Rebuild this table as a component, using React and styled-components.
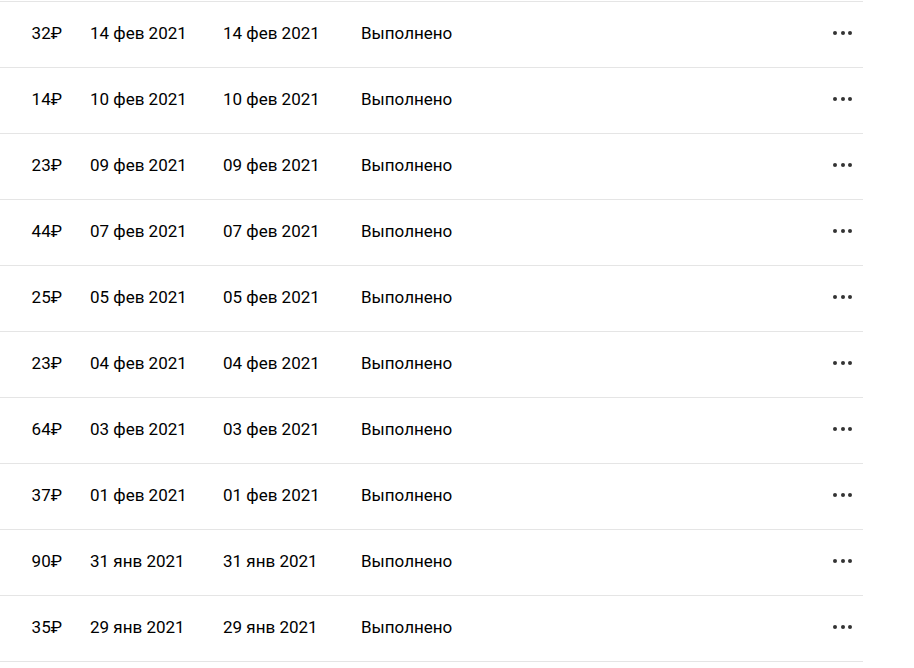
import React from 'react';
import styled, { createGlobalStyle } from 'styled-components';

const GlobalStyle = createGlobalStyle`
  html, body {
    margin: 0;
    padding: 0;
    background: #fff;
  }
  body {
    font-family: Roboto, "Liberation Sans", Arial, sans-serif;
    color: #000;
  }
`;

const Table = styled.div`
  width: 863px;
  margin-top: 1px;
  border-top: 1px solid #e5e5e5;
`;

const Row = styled.div`
  display: grid;
  grid-template-columns: 90px 133px 138px 1fr 40px;
  align-items: center;
  box-sizing: border-box;
  height: 66px;
  padding-bottom: 4px;
  border-bottom: 1px solid #e5e5e5;
  font-size: 17px;
  line-height: 20px;
`;

const Amount = styled.div`
  text-align: right;
  padding-right: 28px;
`;

const Cell = styled.div`
  white-space: nowrap;
`;

const MoreButton = styled.button`
  display: flex;
  gap: 3.5px;
  align-items: center;
  border: 0;
  background: none;
  padding: 0 0 0 10px;
  cursor: pointer;
  height: 20px;
`;

const Dot = styled.span`
  width: 4px;
  height: 4px;
  border-radius: 50%;
  background: #333;
`;

const rows = [
  ['32', '14 фев 2021'],
  ['14', '10 фев 2021'],
  ['23', '09 фев 2021'],
  ['44', '07 фев 2021'],
  ['25', '05 фев 2021'],
  ['23', '04 фев 2021'],
  ['64', '03 фев 2021'],
  ['37', '01 фев 2021'],
  ['90', '31 янв 2021'],
  ['35', '29 янв 2021'],
];

export default function App() {
  return (
    <>
      <GlobalStyle />
      <Table>
        {rows.map(([sum, date], i) => (
          <Row key={i}>
            <Amount>{sum}₽</Amount>
            <Cell>{date}</Cell>
            <Cell>{date}</Cell>
            <Cell>Выполнено</Cell>
            <MoreButton aria-label="Ещё">
              <Dot />
              <Dot />
              <Dot />
            </MoreButton>
          </Row>
        ))}
      </Table>
    </>
  );
}
